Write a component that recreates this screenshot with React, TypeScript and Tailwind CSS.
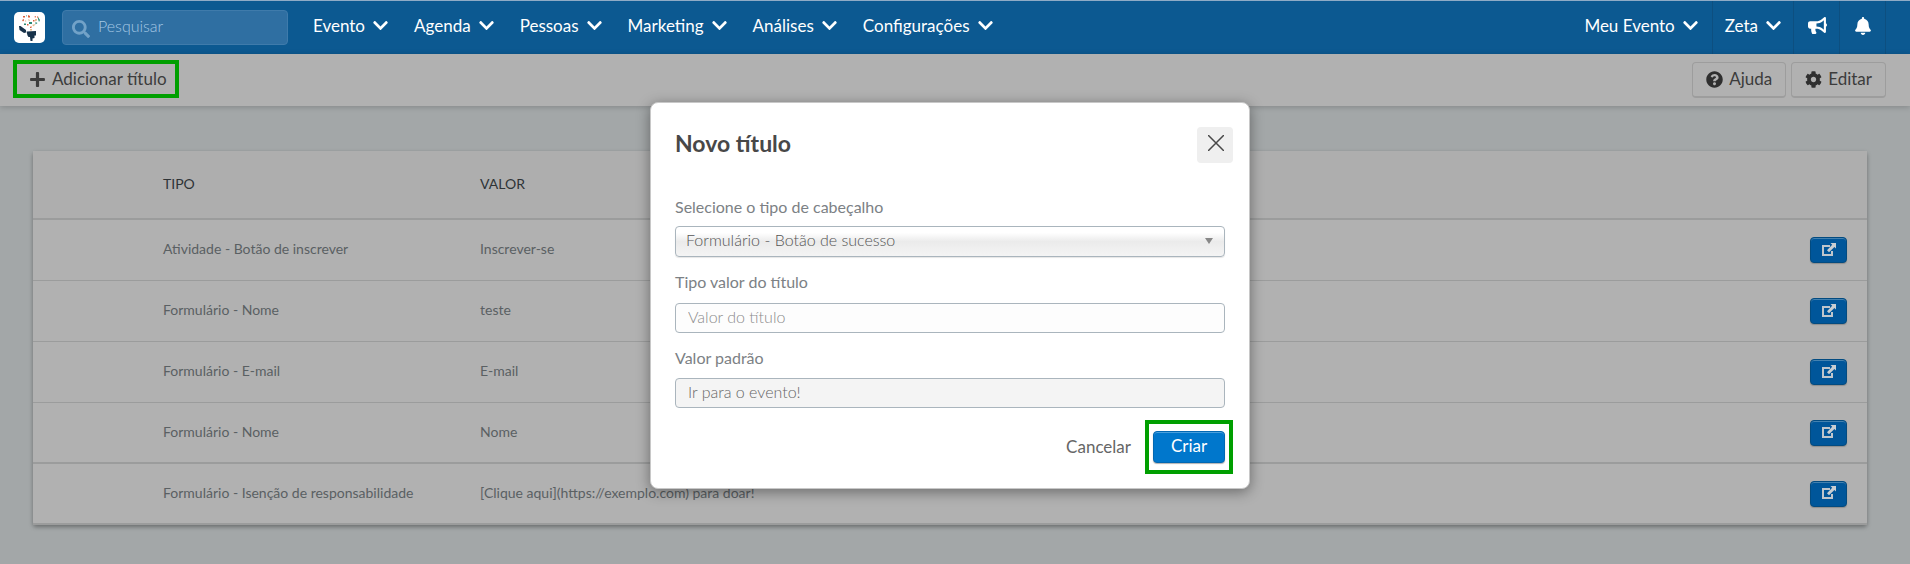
import React from 'react';
import { FaBell, FaBullhorn, FaChevronDown, FaCog, FaPlus, FaQuestionCircle, FaSearch } from 'react-icons/fa';

const menuItems = ['Evento', 'Agenda', 'Pessoas', 'Marketing', 'Análises', 'Configurações'];

const rows = [
  { type: 'Atividade - Botão de inscrever', value: 'Inscrever-se', line: 'border-b' },
  { type: 'Formulário - Nome', value: 'teste', line: 'border-b' },
  { type: 'Formulário - E-mail', value: 'E-mail', line: 'border-b' },
  { type: 'Formulário - Nome', value: 'Nome', line: 'border-b-2' },
  { type: 'Formulário - Isenção de responsabilidade', value: '[Clique aqui](https://exemplo.com) para doar!', line: 'border-b-2' },
];

const Logo: React.FC = () => (
  <svg viewBox="0 0 31 31" className="size-[31px] shrink-0" aria-label="Início" role="img">
    <rect width="31" height="31" rx="5" fill="#fff" />
    <path d="M5 14l1.500 0L12 18v2.500l-2 .5-4.500-3z" fill="#17324a" />
    <path d="M12.500 19.500l9.500-.5v4.500h-1.500V26l-2 .5V29h-2l-.5-4h-1.500l-1-1.500z" fill="#17324a" />
    <g fill="#d9603b">
      <path d="M9 4h2v1.500H9zM8 8l2-1v1.500l-1 1zM14 3l2 1v1.500h-2zM20 5l2-1v1.500zM16 15l1.500-1v2h-1.500zM19 8h1.500v1.500H19zM13 12h1.500v1.500H13zM23 4l1.500 1-1 1.500z" />
    </g>
    <g fill="#2d8a72">
      <path d="M12 4l1-1v1.500zM10 11.500h2V13h-2zM24 5l2 3-1 2-1-3zM15 10h3v2h-3zM21.500 10l2 1-2 1.500z" />
    </g>
    <g fill="#e2b98c">
      <path d="M14 7l2 1-1 1.500zM11 8l1.500 1-1 1zM18 13l3-1-1 2.500zM21 7h2v1.500l-2 1zM16 17h2v1.500h-2z" />
    </g>
  </svg>
);

const OpenIcon: React.FC = () => (
  <svg viewBox="0 0 14 13" className="h-[13px] w-[14px]" aria-hidden="true">
    <path d="M8 3H1v9h9V8" fill="none" stroke="#bfc6cc" strokeWidth="2" />
    <path d="M8.500 0H14v5.500l-1.600-1.600L7 9.200 5 7.200l5.200-5.400z" fill="#c9ced2" />
  </svg>
);

const NavButton: React.FC<{ label: string }> = ({ label }) => (
  <button type="button" className="flex items-center gap-2">
    <span>{label}</span>
    <FaChevronDown className="h-[17px] w-[15px]" />
  </button>
);

const Navbar: React.FC = () => (
  <header className="flex h-[54px] items-stretch border-t border-[#8fabc6] bg-[#0c5991] pl-3.5 text-[17px] leading-6 text-white">
    <a href="#" className="flex items-center">
      <Logo />
    </a>
    <label className="my-auto ml-[17px] flex h-[35px] w-[226px] items-center gap-2 rounded border border-[#3f7bab] bg-[#2f6fa2] pl-[9px]">
      <FaSearch className="mt-0.5 size-[18px] shrink-0 text-[#72a2c8]" />
      <input type="text" aria-label="Pesquisar" placeholder="Pesquisar" className="h-8 w-full min-w-0 bg-transparent pb-1 text-base font-light outline-none placeholder:text-[#a5c8e4]" />
    </label>
    <nav className="ml-[25px] flex items-center gap-[26px] pb-1">
      {menuItems.map((item) => (
        <NavButton key={item} label={item} />
      ))}
    </nav>
    <div className="ml-auto flex items-stretch divide-x divide-[#0d4f80] border-r border-[#0d4f80] *:pb-1">
      <div className="flex pr-3.5"><NavButton label="Meu Evento" /></div>
      <div className="flex px-3"><NavButton label="Zeta" /></div>
      <button type="button" aria-label="Novidades" className="w-[46px] pl-3.5">
        <FaBullhorn className="size-[19px]" />
      </button>
      <button type="button" aria-label="Notificações" className="w-[45px] pl-3.5">
        <FaBell className="size-[18px]" />
      </button>
    </div>
    <div className="w-6 shrink-0" />
  </header>
);

const Toolbar: React.FC = () => (
  <div className="relative flex h-[52px] items-start justify-between bg-[#b1b1b1] pt-1.5 pr-6 pl-[13px] text-[17px] leading-6 text-[#3c3c3c] shadow-[0_1px_6px_rgba(0,0,0,0.2)]">
    <button type="button" className="flex h-[38px] items-center gap-[7px] border-4 border-[#009f00] pr-2 pl-[13px]">
      <FaPlus className="h-[17px] w-[15px]" />
      Adicionar título
    </button>
    <div className="flex gap-[5px] pt-0.5">
      <button type="button" className="flex h-9 items-center gap-1.5 rounded border border-b-2 border-[#9d9d9d] px-[13px] pb-px">
        <FaQuestionCircle className="size-[17px] text-[#2f2f2f]" />
        Ajuda
      </button>
      <button type="button" className="flex h-9 items-center gap-1.5 rounded border border-b-2 border-[#9d9d9d] px-[13px] pb-px">
        <FaCog className="size-[17px] text-[#2f2f2f]" />
        Editar
      </button>
    </div>
  </div>
);

const TitlesTable: React.FC = () => (
  <main className="pt-[45px] pr-[43px] pl-[33px]">
    <table className="w-full table-fixed border-separate border-spacing-0 rounded-[3px] bg-[#b1b1b1] text-left text-sm text-[#5a6063] shadow-[0_2px_4px_rgba(0,0,0,0.35)]">
      <colgroup>
        <col className="w-[130px]" />
        <col className="w-[317px]" />
        <col />
        <col className="w-20" />
      </colgroup>
      <thead>
        <tr className="h-[69px] bg-[#aeaeae] text-[#2f3437] *:border-b-2 *:border-[#9b9c9c] *:pb-0.5 *:font-normal">
          <td></td>
          <th scope="col">TIPO</th>
          <th scope="col">VALOR</th>
          <td></td>
        </tr>
      </thead>
      <tbody>
        {rows.map((row, i) => (
          <tr key={i} className="h-[61px]">
            <td className={`border-[#9b9c9c] ${row.line}`}></td>
            <td className={`border-[#9b9c9c] pb-0.5 ${row.line}`}>{row.type}</td>
            <td className={`border-[#9b9c9c] pb-0.5 ${row.line}`}>{row.value}</td>
            <td className={`border-[#9b9c9c] pr-5 ${row.line}`}>
              <button type="button" aria-label="Abrir" className="ml-auto flex h-[26px] w-[37px] items-center justify-center rounded border border-[#034b80] bg-[#00569a] pb-0.5 shadow-[inset_0_1px_0_#4482b0,0_1px_1px_rgba(0,0,0,0.2)]">
                <OpenIcon />
              </button>
            </td>
          </tr>
        ))}
      </tbody>
    </table>
  </main>
);

const NewTitleModal: React.FC = () => (
  <div className="absolute inset-x-0 top-[102px] flex justify-center pr-2.5">
    <form role="dialog" aria-labelledby="modal-title" className="flex w-[600px] flex-col rounded-lg border border-[#c8c8c8] bg-white pt-6 pr-4 pb-3.5 pl-6 text-base leading-5 text-[#7c8185] shadow-[0_3px_14px_rgba(0,0,0,0.4)]">
      <div className="flex items-start justify-between">
        <h2 id="modal-title" className="pt-1 text-[23px] leading-6 font-bold text-[#484848]">Novo título</h2>
        <button type="button" aria-label="Fechar" className="flex size-9 justify-center rounded bg-[#efefef] pt-2 pl-px">
          <svg viewBox="0 0 16 16" className="size-4 text-[#484848]" aria-hidden="true">
            <path d="M0 0l16 16M16 0L0 16" stroke="currentColor" strokeWidth="1.500" />
          </svg>
        </button>
      </div>

      <div className="flex flex-col pt-[34px] pr-2">
        <label htmlFor="header-type">Selecione o tipo de cabeçalho</label>
        <div className="relative mt-[9px]">
          <select id="header-type" className="h-[31px] w-full appearance-none rounded border border-[#aab5bd] bg-linear-to-b from-white from-20% via-[#ebebeb] via-50% to-[#f4f4f4] px-2.5 pb-1 font-light text-[#555] shadow-[0_1px_1px_rgba(0,0,0,0.1)] outline-none">
            <option>Formulário - Botão de sucesso</option>
          </select>
          <svg viewBox="0 0 8 6" className="pointer-events-none absolute top-3 right-3 h-1.5 w-2" aria-hidden="true">
            <path d="M0 0h8L4 6z" fill="#888" />
          </svg>
        </div>
        <label htmlFor="title-value" className="mt-[15px]">Tipo valor do título</label>
        <input id="title-value" type="text" placeholder="Valor do título" className="mt-[11px] h-[30px] rounded border border-[#aab5bd] bg-[#fdfdfd] px-3 pb-1 font-light outline-none placeholder:text-[#8c8c8c]" />
        <label htmlFor="default-value" className="mt-[15px]">Valor padrão</label>
        <input id="default-value" type="text" readOnly value="Ir para o evento!" className="mt-[10px] h-[30px] rounded border border-[#aab5bd] bg-[#f4f4f4] px-3 pb-1 font-light text-[#666] outline-none" />
      </div>

      <div className="mt-3 flex items-center justify-end gap-3.5 text-[17px]">
        <button type="button" className="pb-px text-[#666]">Cancelar</button>
        <div className="border-4 border-[#009f00] px-1 py-[7px]">
          <button type="submit" className="flex h-8 w-[72px] items-center justify-center rounded border border-[#0268b3] bg-[#0077cc] pb-0.5 text-white shadow-[inset_0_1px_0_#4ba0dd,0_1px_1px_rgba(0,0,0,0.3)]">Criar</button>
        </div>
      </div>
    </form>
  </div>
);

const App: React.FC = () => {
  return (
    <div className="relative min-h-screen bg-[#a3a7a8] font-['Lato',sans-serif]">
      <Navbar />
      <Toolbar />
      <TitlesTable />
      <NewTitleModal />
    </div>
  );
};

export default App;
